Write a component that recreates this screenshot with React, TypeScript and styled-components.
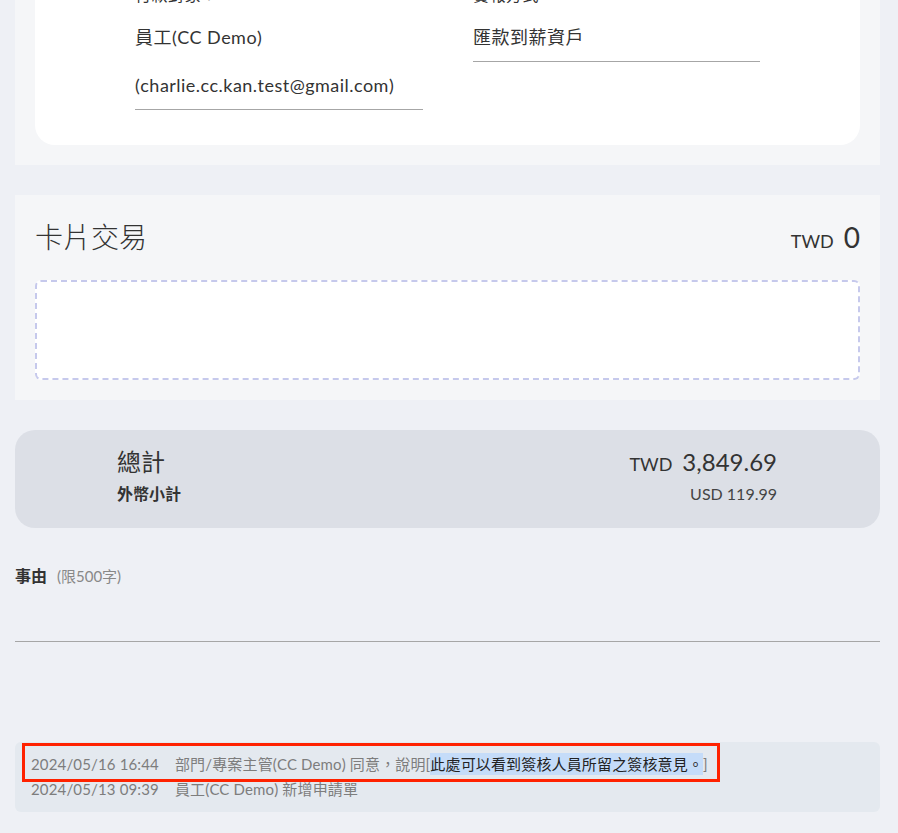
import React from "react";
import styled, { createGlobalStyle } from "styled-components";

const GlobalStyle = createGlobalStyle`
  body {
    margin: 0;
    background: #eef0f5;
    font-family: Lato, "Noto Sans CJK TC", sans-serif;
    letter-spacing: 0.03em;
    color: #333;
  }
`;

const Page = styled.div`
  display: flex;
  flex-direction: column;
  gap: 30px;
  margin-top: -37px;
  padding: 0 18px 21px 15px;
`;

const Panel = styled.section<{ $pad: string }>`
  background: #f5f6f8;
  padding: ${(p) => p.$pad};
`;

const InfoCard = styled.div`
  display: grid;
  grid-template-columns: 288px 287px;
  column-gap: 50px;
  align-items: start;
  background: #fff;
  border-radius: 20px;
  padding: 20px 100px 35px;
`;

const Field = styled.div`
  display: flex;
  flex-direction: column;
`;

const FieldLabel = styled.div`
  font-size: 16px;
  line-height: 24px;
  margin-bottom: 6px;
  color: #333;
`;

const FieldValue = styled.div`
  font-size: 18px;
  line-height: 48px;
  color: #333;
  border-bottom: 1px solid #a6a6a6;
`;

const SectionHeader = styled.div`
  display: flex;
  justify-content: space-between;
  align-items: baseline;
  height: 44px;
  margin-bottom: 21px;
`;

const SectionTitle = styled.h2`
  margin: 0;
  font-size: 28px;
  font-weight: 300;
  line-height: 44px;
  letter-spacing: 0;
  color: #333;
`;

const Currency = styled.span<{ $size: number }>`
  font-size: ${(p) => p.$size}px;
  margin-right: 10px;
  letter-spacing: 0;
  color: #333;
`;

const Amount = styled.span<{ $size: number }>`
  font-size: ${(p) => p.$size}px;
  letter-spacing: 0;
  color: #333;
`;

const DropZone = styled.div`
  height: 100px;
  box-sizing: border-box;
  background: #fff;
  border: 2px dashed #c6c9ec;
  border-radius: 6px;
`;

const TotalCard = styled.div`
  background: #dcdfe6;
  border-radius: 20px;
  padding: 16px 103px 22px 102px;
`;

const TotalRow = styled.div<{ $height: number; $gap?: number }>`
  display: flex;
  justify-content: space-between;
  align-items: baseline;
  height: ${(p) => p.$height}px;
  line-height: ${(p) => p.$height}px;
  margin-top: ${(p) => p.$gap ?? 0}px;
`;

const TotalLabel = styled.span<{ $size: number; $bold?: boolean }>`
  font-size: ${(p) => p.$size}px;
  font-weight: ${(p) => (p.$bold ? 700 : 400)};
  letter-spacing: 0;
  color: #333;
`;

const SubAmount = styled.span`
  font-size: 16px;
  letter-spacing: 0;
  color: #444;
`;

const ReasonSection = styled.div`
  padding-top: 6px;
`;

const ReasonLabel = styled.div`
  font-size: 16px;
  line-height: 24px;
  font-weight: 700;
  letter-spacing: 0;
  color: #333;
`;

const Hint = styled.span`
  font-size: 15px;
  font-weight: 400;
  color: #888;
  margin-left: 10px;
`;

const ReasonInput = styled.textarea`
  display: block;
  width: 100%;
  height: 54px;
  box-sizing: border-box;
  background: transparent;
  border: none;
  border-bottom: 1px solid #a6a6a6;
  resize: none;
  outline: none;
  font: inherit;
`;

const LogBox = styled.div`
  position: relative;
  margin-top: 70px;
  background: #e4e9ef;
  border-radius: 6px;
  padding: 10px 16px;
`;

const LogLine = styled.div`
  font-size: 15px;
  line-height: 25px;
  letter-spacing: 0.01em;
  color: #7d7d7d;
  white-space: nowrap;
`;

const LogTime = styled.span`
  margin-right: 16px;
`;

const Selected = styled.span`
  background: #c5dcf9;
  color: #222;
  padding: 2px 0;
`;

const Annotation = styled.div`
  position: absolute;
  left: 7px;
  top: 1px;
  width: 698px;
  height: 39px;
  box-sizing: border-box;
  border: 3px solid #ff2200;
  pointer-events: none;
`;

const logs = [
  {
    time: "2024/05/16 16:44",
    text: "部門/專案主管(CC Demo) 同意，說明[",
    note: "此處可以看到簽核人員所留之簽核意見。",
    tail: "]",
  },
  { time: "2024/05/13 09:39", text: "員工(CC Demo) 新增申請單" },
];

export default function App() {
  return (
    <>
      <GlobalStyle />
      <Page>
        <Panel $pad="0 20px 20px">
          <InfoCard>
            <Field>
              <FieldLabel>付款對象：</FieldLabel>
              <FieldValue>
                員工(CC Demo)
                <br />
                (charlie.cc.kan.test@gmail.com)
              </FieldValue>
            </Field>
            <Field>
              <FieldLabel>實報方式</FieldLabel>
              <FieldValue>匯款到薪資戶</FieldValue>
            </Field>
          </InfoCard>
        </Panel>

        <Panel $pad="20px">
          <SectionHeader>
            <SectionTitle>卡片交易</SectionTitle>
            <div>
              <Currency $size={18}>TWD</Currency>
              <Amount $size={28}>0</Amount>
            </div>
          </SectionHeader>
          <DropZone />
        </Panel>

        <TotalCard>
          <TotalRow $height={32}>
            <TotalLabel $size={24}>總計</TotalLabel>
            <div>
              <Currency $size={18}>TWD</Currency>
              <Amount $size={24}>3,849.69</Amount>
            </div>
          </TotalRow>
          <TotalRow $height={24} $gap={4}>
            <TotalLabel $size={16} $bold>
              外幣小計
            </TotalLabel>
            <SubAmount>USD 119.99</SubAmount>
          </TotalRow>
        </TotalCard>

        <ReasonSection>
          <ReasonLabel>
            事由<Hint>(限500字)</Hint>
          </ReasonLabel>
          <ReasonInput />
        </ReasonSection>

        <LogBox>
          {logs.map((log) => (
            <LogLine key={log.time}>
              <LogTime>{log.time}</LogTime>
              {log.text}
              {log.note && <Selected>{log.note}</Selected>}
              {log.tail}
            </LogLine>
          ))}
          <Annotation />
        </LogBox>
      </Page>
    </>
  );
}
